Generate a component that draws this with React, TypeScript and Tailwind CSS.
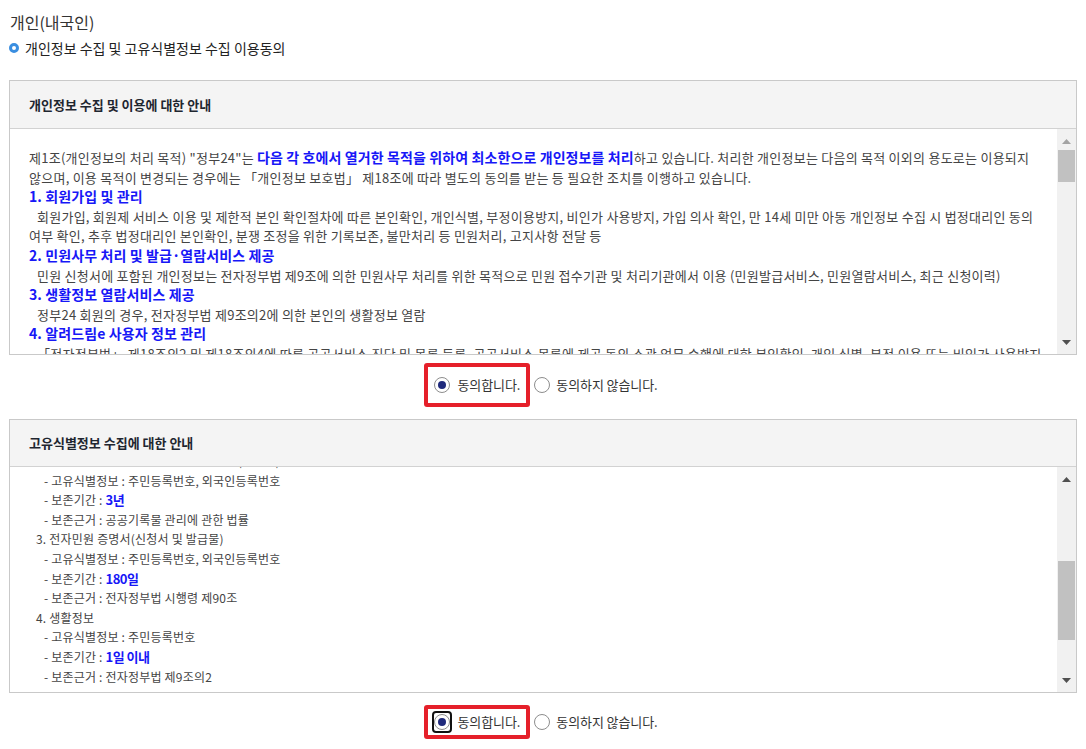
import React from "react";

const BLUE = "text-[#1717f7]";

function Arrow({ dir, color }: { dir: "up" | "down"; color: string }) {
  return (
    <svg width="9" height="5" viewBox="0 0 9 5">
      {dir === "up" ? (
        <polygon points="0,5 9,5 4.5,0" fill={color} />
      ) : (
        <polygon points="0,0 9,0 4.5,5" fill={color} />
      )}
    </svg>
  );
}

function ScrollBar({
  thumbTop,
  thumbHeight,
  upColor,
}: {
  thumbTop: number;
  thumbHeight: number;
  upColor: string;
}) {
  return (
    <div className="w-[19px] bg-[#f1f1f1] flex flex-col shrink-0">
      <div className="h-[21px] flex items-center justify-center pt-[3px]">
        <Arrow dir="up" color={upColor} />
      </div>
      <div className="flex-1 flex flex-col">
        <div
          className="ml-[1px] w-[17px] bg-[#c1c1c1]"
          style={{ marginTop: thumbTop, height: thumbHeight }}
        />
      </div>
      <div className="h-[21px] flex items-center justify-center pb-[3px]">
        <Arrow dir="down" color="#505050" />
      </div>
    </div>
  );
}

function Radio({ checked, focus }: { checked?: boolean; focus?: boolean }) {
  const circle = (
    <span className="w-[16px] h-[16px] rounded-full border border-[#8d8d8d] bg-white flex items-center justify-center">
      {checked && <span className="w-[8px] h-[8px] rounded-full bg-[#1f2a7c]" />}
    </span>
  );
  if (focus) {
    return (
      <span className="w-[20px] h-[22px] -mx-[2px] rounded-[4px] border-2 border-[#111] flex items-center justify-center">
        {circle}
      </span>
    );
  }
  return circle;
}

function AgreeRow({ py, focus }: { py: string; focus?: boolean }) {
  return (
    <div className="flex justify-center items-center pr-[4px]">
      <div
        className={`flex items-center gap-[7px] border-4 border-[#e5202a] rounded-[3px] pl-[6px] pr-[6px] ${py}`}
      >
        <Radio checked focus={focus} />
        <span className="text-[13px] tracking-[-0.1px] text-[#333] leading-[18px]">동의합니다.</span>
      </div>
      <div className="flex items-center gap-[6px] ml-[4px]">
        <Radio />
        <span className="text-[13px] tracking-[-0.1px] text-[#333] leading-[18px]">동의하지 않습니다.</span>
      </div>
    </div>
  );
}

function Line({
  children,
  indent = 0,
  heading,
}: {
  children: React.ReactNode;
  indent?: number;
  heading?: boolean;
}) {
  return (
    <div
      className={`whitespace-nowrap h-[19.6px] leading-[19.6px] ${
        heading ? `${BLUE} font-bold text-[14px] tracking-[0.1px]` : ""
      }`}
      style={{ paddingLeft: indent }}
    >
      {children}
    </div>
  );
}

function Hl({ children, big }: { children: React.ReactNode; big?: boolean }) {
  return (
    <span
      className={`${BLUE} font-bold ${big ? "text-[14px] tracking-[0.1px]" : "text-[13px] tracking-[-0.5px]"}`}
    >
      {children}
    </span>
  );
}

export default function App() {
  return (
    <div className="w-[1086px] h-[749px] bg-white overflow-hidden font-['Noto_Sans_CJK_KR',sans-serif] text-[#333]">
      <div className="pl-[10px] pt-[11px] h-[34px] text-[16px] leading-[22px] text-[#333]">
        개인(내국인)
      </div>
      <div className="mt-[4px] h-[20px] flex items-center pl-[9px] gap-[6px]">
        <span className="w-[10px] h-[10px] rounded-full border-[3px] border-[#3a8ee0]" />
        <span className="text-[14px] leading-[20px] text-[#222]">
          개인정보 수집 및 고유식별정보 수집 이용동의
        </span>
      </div>

      {/* Box 1 */}
      <div className="mt-[22px] ml-[9px] w-[1068px] border border-[#c9c9c9]">
        <div className="h-[48px] bg-[#f4f4f4] border-b border-[#d2d2d2] flex items-center pl-[19px]">
          <span className="text-[13px] font-bold text-[#1f2630]">
            개인정보 수집 및 이용에 대한 안내
          </span>
        </div>
        <div className="h-[225px] flex">
          <div className="flex-1 overflow-hidden pl-[19px] pt-[19px] text-[13px] tracking-[0.25px] text-[#444]">
            <Line>
              제1조(개인정보의 처리 목적) "정부24"는{" "}
              <Hl big>다음 각 호에서 열거한 목적을 위하여 최소한으로 개인정보를 처리</Hl>하고 있습니다. 처리한
              개인정보는 다음의 목적 이외의 용도로는 이용되지
            </Line>
            <Line>
              않으며, 이용 목적이 변경되는 경우에는 「개인정보 보호법」 제18조에 따라 별도의 동의를 받는 등 필요한
              조치를 이행하고 있습니다.
            </Line>
            <Line heading>1. 회원가입 및 관리</Line>
            <Line indent={8}>
              회원가입, 회원제 서비스 이용 및 제한적 본인 확인절차에 따른 본인확인, 개인식별, 부정이용방지,
              비인가 사용방지, 가입 의사 확인, 만 14세 미만 아동 개인정보 수집 시 법정대리인 동의
            </Line>
            <Line>
              여부 확인, 추후 법정대리인 본인확인, 분쟁 조정을 위한 기록보존, 불만처리 등 민원처리, 고지사항 전달 등
            </Line>
            <Line heading>2. 민원사무 처리 및 발급·열람서비스 제공</Line>
            <Line indent={8}>
              민원 신청서에 포함된 개인정보는 전자정부법 제9조에 의한 민원사무 처리를 위한 목적으로 민원 접수기관 및
              처리기관에서 이용 (민원발급서비스, 민원열람서비스, 최근 신청이력)
            </Line>
            <Line heading>3. 생활정보 열람서비스 제공</Line>
            <Line indent={8}>정부24 회원의 경우, 전자정부법 제9조의2에 의한 본인의 생활정보 열람</Line>
            <Line heading>4. 알려드림e 사용자 정보 관리</Line>
            <Line indent={8}>
              「전자정부법」 제18조의2 및 제18조의4에 따른 공공서비스 진단 및 목록 등록, 공공서비스 목록에 제공 동의
              소관 업무 수행에 대한 본인확인, 개인 식별, 부정 이용 또는 비인가 사용방지
            </Line>
          </div>
          <ScrollBar thumbTop={0} thumbHeight={32} upColor="#a3a3a3" />
        </div>
      </div>

      <div className="mt-[8px]">
        <AgreeRow py="py-[9px]" />
      </div>

      {/* Box 2 */}
      <div className="mt-[12px] ml-[9px] w-[1068px] border border-[#c9c9c9]">
        <div className="h-[47px] bg-[#f4f4f4] border-b border-[#d2d2d2] flex items-center pl-[19px]">
          <span className="text-[13px] font-bold text-[#1f2630]">고유식별정보 수집에 대한 안내</span>
        </div>
        <div className="h-[225px] flex">
          <div className="flex-1 overflow-hidden pl-[26px] text-[12px] tracking-[0.2px] text-[#444]">
            <div className="-mt-[16px]">
              <Line indent={8}>- 보존근거 : 민원사무 처리에 관한 법률(시행령)</Line>
              <Line indent={8}>- 고유식별정보 : 주민등록번호, 외국인등록번호</Line>
              <Line indent={8}>
                - 보존기간 : <Hl>3년</Hl>
              </Line>
              <Line indent={8}>- 보존근거 : 공공기록물 관리에 관한 법률</Line>
              <Line>3. 전자민원 증명서(신청서 및 발급물)</Line>
              <Line indent={8}>- 고유식별정보 : 주민등록번호, 외국인등록번호</Line>
              <Line indent={8}>
                - 보존기간 : <Hl>180일</Hl>
              </Line>
              <Line indent={8}>- 보존근거 : 전자정부법 시행령 제90조</Line>
              <Line>4. 생활정보</Line>
              <Line indent={8}>- 고유식별정보 : 주민등록번호</Line>
              <Line indent={8}>
                - 보존기간 : <Hl>1일 이내</Hl>
              </Line>
              <Line indent={8}>- 보존근거 : 전자정부법 제9조의2</Line>
            </div>
          </div>
          <ScrollBar thumbTop={73} thumbHeight={79} upColor="#505050" />
        </div>
      </div>

      <div className="mt-[12px]">
        <AgreeRow py="py-[2px]" focus />
      </div>
    </div>
  );
}
